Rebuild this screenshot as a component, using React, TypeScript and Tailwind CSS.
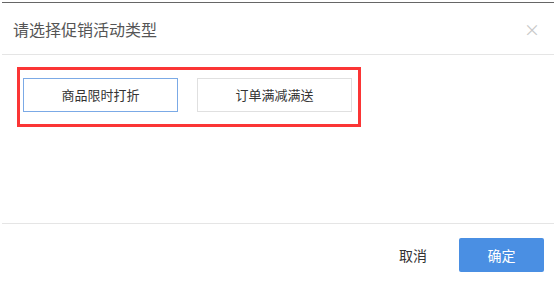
import React, { useState } from 'react';

const font = { fontFamily: '"Noto Sans CJK SC", "Liberation Sans", sans-serif' };

export default function App() {
  const [selected, setSelected] = useState('discount');

  const btnBase = "w-[155px] h-[34px] flex items-center justify-center text-[13px] text-[#333] bg-white border";

  return (
    <div className="w-[557px] h-[283px] bg-white pl-[2px] pr-[3px] pt-[2px]" style={font}>
      <div className="h-full border-t border-[#666] flex flex-col">
        {/* header */}
        <div className="h-[52px] flex items-center justify-between pl-[11px] pr-[14px] border-b border-[#e5e5e5] shrink-0">
          <span className="text-[16px] text-[#555] leading-none">请选择促销活动类型</span>
          <span className="text-[#c8c8c8] text-[16px] leading-none">×</span>
        </div>

        {/* body */}
        <div className="h-[168px] pt-[12px] pl-[15px] shrink-0">
          <div className="w-[344px] h-[60px] border-[3px] border-[#fb3535] flex items-start gap-[19px] pt-[8px] pl-[3px]">
            <button
              className={`${btnBase} ${selected === 'discount' ? 'border-[#7baae6]' : 'border-[#e0e0e0]'}`}
              onClick={() => setSelected('discount')}
            >
              商品限时打折
            </button>
            <button
              className={`${btnBase} ${selected === 'order' ? 'border-[#7baae6]' : 'border-[#e0e0e0]'}`}
              onClick={() => setSelected('order')}
            >
              订单满减满送
            </button>
          </div>
        </div>

        {/* footer */}
        <div className="flex-1 border-t border-[#e5e5e5] flex items-start justify-end pt-[14px] pr-[10px]">
          <button className="h-[34px] px-[13px] mr-[19px] text-[14px] text-[#333]">取消</button>
          <button className="w-[85px] h-[34px] rounded-[2px] bg-[#4a8fe3] text-white text-[14px]">确定</button>
        </div>
      </div>
    </div>
  );
}
